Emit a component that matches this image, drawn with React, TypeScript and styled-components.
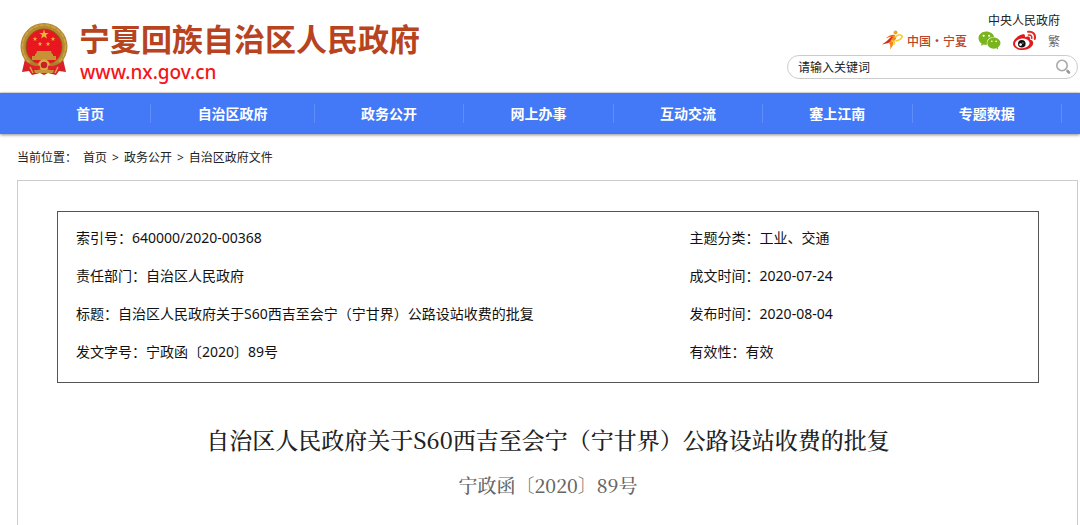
import React from "react";
import styled, { createGlobalStyle } from "styled-components";
import { FaWeixin } from "react-icons/fa";

const sans = `"Noto Sans", "Noto Sans CJK SC", sans-serif`;
const serif = `"Noto Serif CJK SC", "Liberation Serif", serif`;

const GlobalStyle = createGlobalStyle`
  * { box-sizing: border-box; }
  body {
    margin: 0;
    background: #fff;
    color: #222;
    font-family: ${sans};
    font-size: 12px;
  }
  a { color: inherit; text-decoration: none; }
`;

const Page = styled.div`
  display: flex;
  flex-direction: column;
  min-height: 100vh;
`;

const Header = styled.header`
  display: flex;
  justify-content: space-between;
  height: 93px;
  padding: 0 2px 0 19px;
  border-bottom: 1px solid #e4e4e4;
`;

const Brand = styled.a`
  display: flex;
  align-items: flex-start;
  gap: 10px;
  padding-top: 22px;
`;

const BrandText = styled.div`
  display: flex;
  flex-direction: column;
`;

const SiteName = styled.span`
  color: #b8431f;
  font-family: "Liberation Sans", "Noto Sans CJK SC", sans-serif;
  font-size: 31px;
  font-weight: 700;
  line-height: 38px;
`;

const SiteUrl = styled.span`
  padding-left: 1px;
  color: #f5141a;
  font-family: "Noto Sans", sans-serif;
  font-size: 19px;
  font-weight: 500;
  line-height: 24px;
`;

const Tools = styled.div`
  display: flex;
  flex-direction: column;
  align-items: flex-end;
  padding-top: 12px;
`;

const TopLink = styled.a`
  margin-right: 18px;
  line-height: 17px;
`;

const Channels = styled.div`
  display: flex;
  align-items: center;
  gap: 11px;
  height: 22px;
  margin: 0 18px 4px 0;
`;

const Channel = styled.a<{ $color?: string }>`
  display: flex;
  align-items: center;
  gap: 4px;
  color: ${(p) => p.$color ?? "#666"};
  font-weight: ${(p) => (p.$color ? 500 : 400)};
  font-family: "Noto Sans CJK SC", sans-serif;
`;

const SearchForm = styled.form`
  display: flex;
  align-items: center;
  width: 291px;
  height: 24px;
  padding: 0 6px 0 10px;
  border: 1px solid #ccc;
  border-radius: 12px;
`;

const SearchInput = styled.input`
  flex: 1;
  min-width: 0;
  padding: 0;
  border: 0;
  outline: 0;
  background: transparent;
  color: #222;
  font: 12px ${sans};
`;

const SearchButton = styled.button`
  display: flex;
  padding: 0;
  border: 0;
  background: none;
  cursor: pointer;
`;

const Nav = styled.nav`
  background: #4379f6;
  box-shadow: 0 1px 3px rgba(0, 0, 0, 0.45);
`;

const NavList = styled.ul`
  display: flex;
  align-items: center;
  height: 41px;
  margin: 0;
  padding: 0 18px 0 30px;
  list-style: none;
`;

const NavItem = styled.li`
  flex: 1 1 auto;
`;

const NavLink = styled.a`
  display: block;
  border-right: 1px solid #5f8efa;
  color: #fff;
  font-size: 14px;
  font-weight: 700;
  line-height: 19px;
  text-align: center;
  white-space: nowrap;
`;

const Breadcrumb = styled.nav`
  display: flex;
  gap: 5px;
  padding: 15px 17px 13px;
  line-height: 18px;
`;

const CrumbLabel = styled.span`
  margin-right: 1px;
`;

const Panel = styled.main`
  flex: 1;
  margin: 0 2px 0 17px;
  padding: 30px 38px 0 39px;
  border: 1px solid #ccc;
  border-bottom: 0;
`;

const InfoBox = styled.div`
  padding: 7px 18px 11px;
  border: 1px solid #555;
`;

const InfoTable = styled.table`
  width: 100%;
  border-collapse: collapse;
  table-layout: fixed;
  color: #111;
  font-size: 14px;
  line-height: 38px;
`;

const InfoCell = styled.td<{ $width?: string }>`
  width: ${(p) => p.$width ?? "auto"};
  padding: 0;
`;

const Title = styled.h1`
  margin: 40px 0 0;
  font-family: ${serif};
  font-size: 23px;
  font-weight: 500;
  line-height: 34px;
  text-align: center;
`;

const DocNumber = styled.p`
  margin: 13px 0 0;
  color: #666;
  font-family: ${serif};
  font-size: 19px;
  font-weight: 500;
  line-height: 30px;
  text-align: center;
`;

const star = (cx: number, cy: number, r: number) =>
  Array.from({ length: 10 }, (_, i) => {
    const a = (Math.PI / 5) * i - Math.PI / 2;
    const d = i % 2 ? r * 0.4 : r;
    return `${cx + d * Math.cos(a)},${cy + d * Math.sin(a)}`;
  }).join(" ");

const Emblem = () => (
  <svg width="50" height="54" viewBox="0 0 50 54" aria-hidden="true">
    <path d="M6 37 3 50l7-1 3 4 8-2 4 2 4-2 8 2 3-4 7 1-3-13z" fill="#d5202a" />
    <circle cx="25" cy="24.500" r="23.5" fill="#b58a30" />
    <circle cx="25" cy="24.500" r="21.500" fill="none" stroke="#cda548" strokeWidth="1.500" strokeDasharray="5 1" />
    <circle cx="25" cy="25" r="18" fill="#e8171f" stroke="#8d5c1c" />
    <polygon points={star(25, 12.5, 5)} fill="#e9b63f" />
    <polygon points={star(16, 17, 2.4)} fill="#e9b63f" />
    <polygon points={star(34, 17, 2.4)} fill="#e9b63f" />
    <polygon points={star(21, 22, 2.4)} fill="#e9b63f" />
    <polygon points={star(29, 22, 2.4)} fill="#e9b63f" />
    <path d="M18 29h14l1 3H17zM16 32h18v2H16zM13 34h24v4H13z" fill="#c69236" />
    <path d="M9 40q16 3 32 0l-3 4q-13 3-26 0z" fill="#ad7d29" />
    <circle cx="25" cy="43" r="4.5" fill="#c4212a" stroke="#dcae45" strokeWidth="2.5" />
    <path d="M6 41q9 6 15 4M44 41q-9 6-15 4" fill="none" stroke="#e2202a" strokeWidth="3" />
    <path d="M15 48h20l-1 3H16z" fill="#c7973b" />
    <path d="m11 45 3 6M39 45l-3 6" stroke="#d9a846" strokeWidth="1.5" />
  </svg>
);

const Runner = () => (
  <svg width="21" height="20" viewBox="0 0 21 20" aria-hidden="true">
    <circle cx="13.500" cy="2.500" r="2" fill="#f2a51b" />
    <path d="M0 14.500Q5 11.500 8 8q2-3 5-3l-3 6q-4 3-10 3.500z" fill="#d8281d" />
    <path d="M4 8.500q4-4.500 9-3.500l-1 2q-4-1-8 1.500z" fill="#ee6a1b" />
    <path d="M12 5q3 1 2 4l-3 3q1 3-3 7.500 1-4.500-1-6.500z" fill="#f08a1c" />
    <path
      d="M13 7q5-4 7-1 .5 3-6 5M10 11q3 0 2 3"
      fill="none"
      stroke="#f8cb2b"
      strokeWidth="1.600"
      strokeLinecap="round"
    />
  </svg>
);

const Weibo = () => (
  <svg width="25" height="21" viewBox="0 0 25 21" aria-hidden="true">
    <path
      d="M10 4.5c2-.8 3.500.2 2.900 2.700 3-1.200 5.800-.7 5.100 2.200 2 .6 3.200 1.800 3.200 3.600 0 3.700-5 7-10.700 7S1 17.300 1 13.500C1 10 6 5.500 10 4.500z"
      fill="#df1a1f"
    />
    <ellipse cx="10.300" cy="13.400" rx="7.300" ry="4.900" fill="#fff" transform="rotate(-6 10.300 13.400)" />
    <circle cx="9.800" cy="13.800" r="3.800" fill="#111" />
    <circle cx="8.600" cy="14.600" r="1.300" fill="#fff" />
    <circle cx="10.900" cy="13" r=".6" fill="#fff" />
    <path d="M16 1.800c4.500-.9 8 2.500 6.800 7.200" fill="none" stroke="#e32a22" strokeWidth="2" strokeLinecap="round" />
    <path d="M16.500 5c2.200-.4 3.700 1.200 3.200 3.200" fill="none" stroke="#e32a22" strokeWidth="1.600" strokeLinecap="round" />
  </svg>
);

const SearchIcon = () => (
  <svg width="16" height="16" viewBox="0 0 16 16" aria-hidden="true">
    <circle cx="7" cy="6.500" r="5.200" fill="none" stroke="#aaa" strokeWidth="1.600" />
    <path d="m12.500 12 1.500 1.500" stroke="#999" strokeWidth="2.600" strokeLinecap="round" />
  </svg>
);

const navItems = ["首页", "自治区政府", "政务公开", "网上办事", "互动交流", "塞上江南", "专题数据"];
const crumbs = ["首页", "政务公开", "自治区政府文件"];
const infoRows = [
  ["索引号：640000/2020-00368", "主题分类：工业、交通"],
  ["责任部门：自治区人民政府", "成文时间：2020-07-24"],
  ["标题：自治区人民政府关于S60西吉至会宁（宁甘界）公路设站收费的批复", "发布时间：2020-08-04"],
  ["发文字号：宁政函〔2020〕89号", "有效性：有效"],
];

export default function App() {
  return (
    <Page lang="zh-CN">
      <GlobalStyle />
      <Header>
        <Brand href="#">
          <Emblem />
          <BrandText>
            <SiteName>宁夏回族自治区人民政府</SiteName>
            <SiteUrl>www.nx.gov.cn</SiteUrl>
          </BrandText>
        </Brand>
        <Tools>
          <TopLink href="#">中央人民政府</TopLink>
          <Channels>
            <Channel href="#" $color="#b8442a">
              <Runner />
              中国•宁夏
            </Channel>
            <Channel href="#" $color="#7ab51d" aria-label="微信">
              <FaWeixin size={23} />
            </Channel>
            <Channel href="#" aria-label="微博">
              <Weibo />
            </Channel>
            <Channel href="#">繁</Channel>
          </Channels>
          <SearchForm onSubmit={(e) => e.preventDefault()}>
            <SearchInput aria-label="搜索" defaultValue="请输入关键词" />
            <SearchButton type="submit" aria-label="搜索">
              <SearchIcon />
            </SearchButton>
          </SearchForm>
        </Tools>
      </Header>
      <Nav>
        <NavList>
          {navItems.map((item) => (
            <NavItem key={item}>
              <NavLink href="#">{item}</NavLink>
            </NavItem>
          ))}
        </NavList>
      </Nav>
      <Breadcrumb>
        <CrumbLabel>当前位置：</CrumbLabel>
        {crumbs.map((crumb, i) => (
          <React.Fragment key={crumb}>
            {i > 0 && <span>&gt;</span>}
            <a href="#">{crumb}</a>
          </React.Fragment>
        ))}
      </Breadcrumb>
      <Panel>
        <InfoBox>
          <InfoTable>
            <tbody>
              {infoRows.map(([left, right]) => (
                <tr key={left}>
                  <InfoCell $width="65%">{left}</InfoCell>
                  <InfoCell>{right}</InfoCell>
                </tr>
              ))}
            </tbody>
          </InfoTable>
        </InfoBox>
        <Title>自治区人民政府关于S60西吉至会宁（宁甘界）公路设站收费的批复</Title>
        <DocNumber>宁政函〔2020〕89号</DocNumber>
      </Panel>
    </Page>
  );
}
